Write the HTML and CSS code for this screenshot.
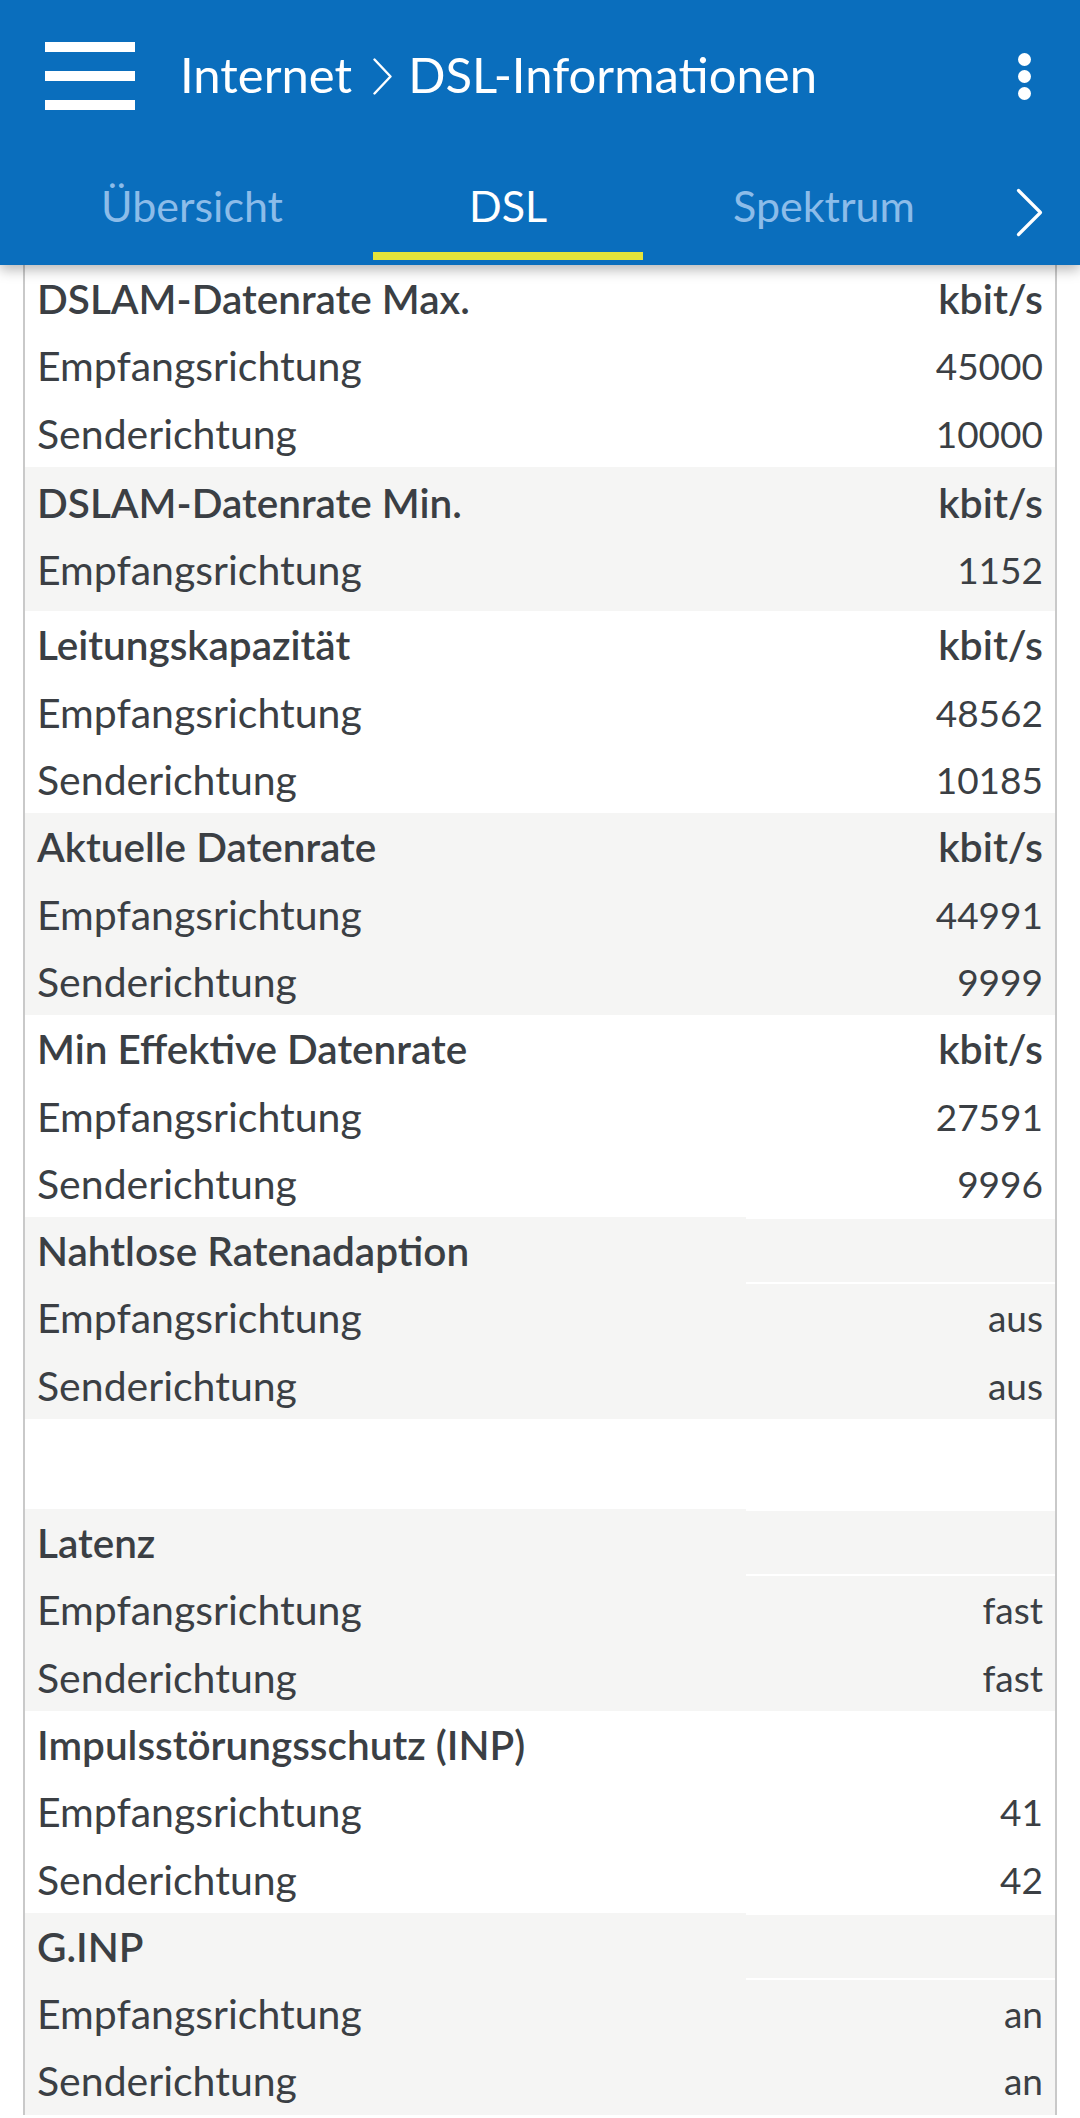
FILE: index.html
```html
<!DOCTYPE html>
<html lang="de">
<head>
<meta charset="utf-8">
<title>DSL-Informationen</title>
<link rel="stylesheet" href="styles.css">
</head>
<body>
<header class="appbar">
  <div class="topbar">
    <div class="menu"><span></span><span></span><span></span></div>
    <h1 class="title"><span>Internet</span><svg class="crumb" viewBox="0 0 19 37"><polyline points="1.5,1.5 17.5,18.5 1.5,35.5" fill="none" stroke="#fff" stroke-width="2.4" stroke-linecap="round" stroke-linejoin="round"/></svg><span>DSL-Informationen</span></h1>
    <div class="more"><i></i><i></i><i></i></div>
  </div>
  <nav class="tabs">
    <div class="tab">Übersicht</div>
    <div class="tab active">DSL</div>
    <div class="tab">Spektrum</div>
    <svg class="next" viewBox="0 0 27 49"><polyline points="2.5,2.5 24.5,24.5 2.5,46.5" fill="none" stroke="#fff" stroke-width="3.2" stroke-linecap="round" stroke-linejoin="round"/></svg>
  </nav>
</header>
<main class="table">
  <section class="sec">
    <div class="row head"><span class="lab">DSLAM-Datenrate Max.</span><span class="val">kbit/s</span></div>
    <div class="row"><span class="lab">Empfangsrichtung</span><span class="val">45000</span></div>
    <div class="row"><span class="lab">Senderichtung</span><span class="val">10000</span></div>
  </section>
  <section class="sec grey min">
    <div class="row head"><span class="lab">DSLAM-Datenrate Min.</span><span class="val">kbit/s</span></div>
    <div class="row"><span class="lab">Empfangsrichtung</span><span class="val">1152</span></div>
  </section>
  <section class="sec">
    <div class="row head"><span class="lab">Leitungskapazität</span><span class="val">kbit/s</span></div>
    <div class="row"><span class="lab">Empfangsrichtung</span><span class="val">48562</span></div>
    <div class="row"><span class="lab">Senderichtung</span><span class="val">10185</span></div>
  </section>
  <section class="sec grey">
    <div class="row head"><span class="lab">Aktuelle Datenrate</span><span class="val">kbit/s</span></div>
    <div class="row"><span class="lab">Empfangsrichtung</span><span class="val">44991</span></div>
    <div class="row"><span class="lab">Senderichtung</span><span class="val">9999</span></div>
  </section>
  <section class="sec">
    <div class="row head"><span class="lab">Min Effektive Datenrate</span><span class="val">kbit/s</span></div>
    <div class="row"><span class="lab">Empfangsrichtung</span><span class="val">27591</span></div>
    <div class="row"><span class="lab">Senderichtung</span><span class="val">9996</span></div>
  </section>
  <section class="sec grey">
    <div class="row head nounit"><span class="lab">Nahtlose Ratenadaption</span><span class="val"></span></div>
    <div class="row"><span class="lab">Empfangsrichtung</span><span class="val">aus</span></div>
    <div class="row"><span class="lab">Senderichtung</span><span class="val">aus</span></div>
  </section>
  <div class="spacer"></div>
  <section class="sec grey">
    <div class="row head nounit"><span class="lab">Latenz</span><span class="val"></span></div>
    <div class="row"><span class="lab">Empfangsrichtung</span><span class="val">fast</span></div>
    <div class="row"><span class="lab">Senderichtung</span><span class="val">fast</span></div>
  </section>
  <section class="sec">
    <div class="row head nounit"><span class="lab">Impulsstörungsschutz (INP)</span><span class="val"></span></div>
    <div class="row"><span class="lab">Empfangsrichtung</span><span class="val">41</span></div>
    <div class="row"><span class="lab">Senderichtung</span><span class="val">42</span></div>
  </section>
  <section class="sec grey">
    <div class="row head nounit"><span class="lab">G.INP</span><span class="val"></span></div>
    <div class="row"><span class="lab">Empfangsrichtung</span><span class="val">an</span></div>
    <div class="row"><span class="lab">Senderichtung</span><span class="val">an</span></div>
  </section>
</main>
</body>
</html>
```
FILE: styles.css
```css
html, body {
  margin: 0;
  padding: 0;
  background: #ffffff;
}

body {
  width: 1080px;
  font-family: Lato, "Open Sans", sans-serif;
  color: #3b3f44;
  overflow: hidden;
}

/* ---------- app bar ---------- */
.appbar {
  position: relative;
  z-index: 2;
  height: 265px;
  background: #0a6ebd;
  box-shadow: 0 5px 12px rgba(0, 0, 0, 0.28);
}

.topbar {
  height: 152px;
  display: flex;
  align-items: center;
  padding: 0 49px 0 45px;
  box-sizing: border-box;
}

.menu {
  width: 90px;
  display: flex;
  flex-direction: column;
  gap: 19px;
  flex: none;
}

.menu span {
  display: block;
  height: 10px;
  background: #ffffff;
}

.title {
  margin: 0 0 4px 45px;
  display: flex;
  align-items: center;
  font-size: 49px;
  font-weight: 400;
  line-height: 59px;
  color: #ffffff;
  white-space: nowrap;
}

.crumb {
  width: 19px;
  height: 37px;
  margin: 4px 16px 0 21px;
  flex: none;
}

.more {
  margin-left: auto;
  display: flex;
  flex-direction: column;
  gap: 4px;
}

.more i {
  display: block;
  width: 13px;
  height: 13px;
  border-radius: 50%;
  background: #ffffff;
}

/* ---------- tabs ---------- */
.tabs {
  height: 113px;
  display: flex;
  padding-left: 34px;
  box-sizing: border-box;
}

.tab {
  width: 316px;
  height: 108px;
  box-sizing: border-box;
  padding-top: 28px;
  display: flex;
  flex-direction: column;
  align-items: center;
  font-size: 43px;
  line-height: 52px;
  color: #8cbce9;
}

.tab.active {
  color: #ffffff;
}

.tab.active::after {
  content: "";
  margin-top: auto;
  width: 270px;
  height: 8px;
  background: #e4e33a;
}

.next {
  width: 27px;
  height: 49px;
  margin: 36px 0 0 34px;
  flex: none;
}

/* ---------- table ---------- */
.table {
  display: block;
  margin: 0 23px;
  border-left: 2px solid #c9c9c9;
  border-right: 2px solid #c9c9c9;
}

.sec.grey {
  background: #f5f5f4;
}

.sec.min {
  padding: 2px 0 8px;
}

.row {
  display: grid;
  grid-template-columns: 721px 1fr;
  height: 67.3px;
  line-height: 67.3px;
  font-size: 41px;
  white-space: nowrap;
}

.row .val {
  font-size: 37px;
}

.row.head .lab {
  font-size: 40.5px;
  font-weight: 600;
}

.row.head .val {
  font-size: 41px;
  font-weight: 600;
}

.lab {
  padding-left: 12px;
}

.val {
  text-align: right;
  padding-right: 12px;
}

.sec.grey .nounit .val {
  background: linear-gradient(to bottom, #ffffff 0 2px, transparent 2px calc(100% - 2px), #ffffff calc(100% - 2px));
}

.spacer {
  height: 90px;
}
```
